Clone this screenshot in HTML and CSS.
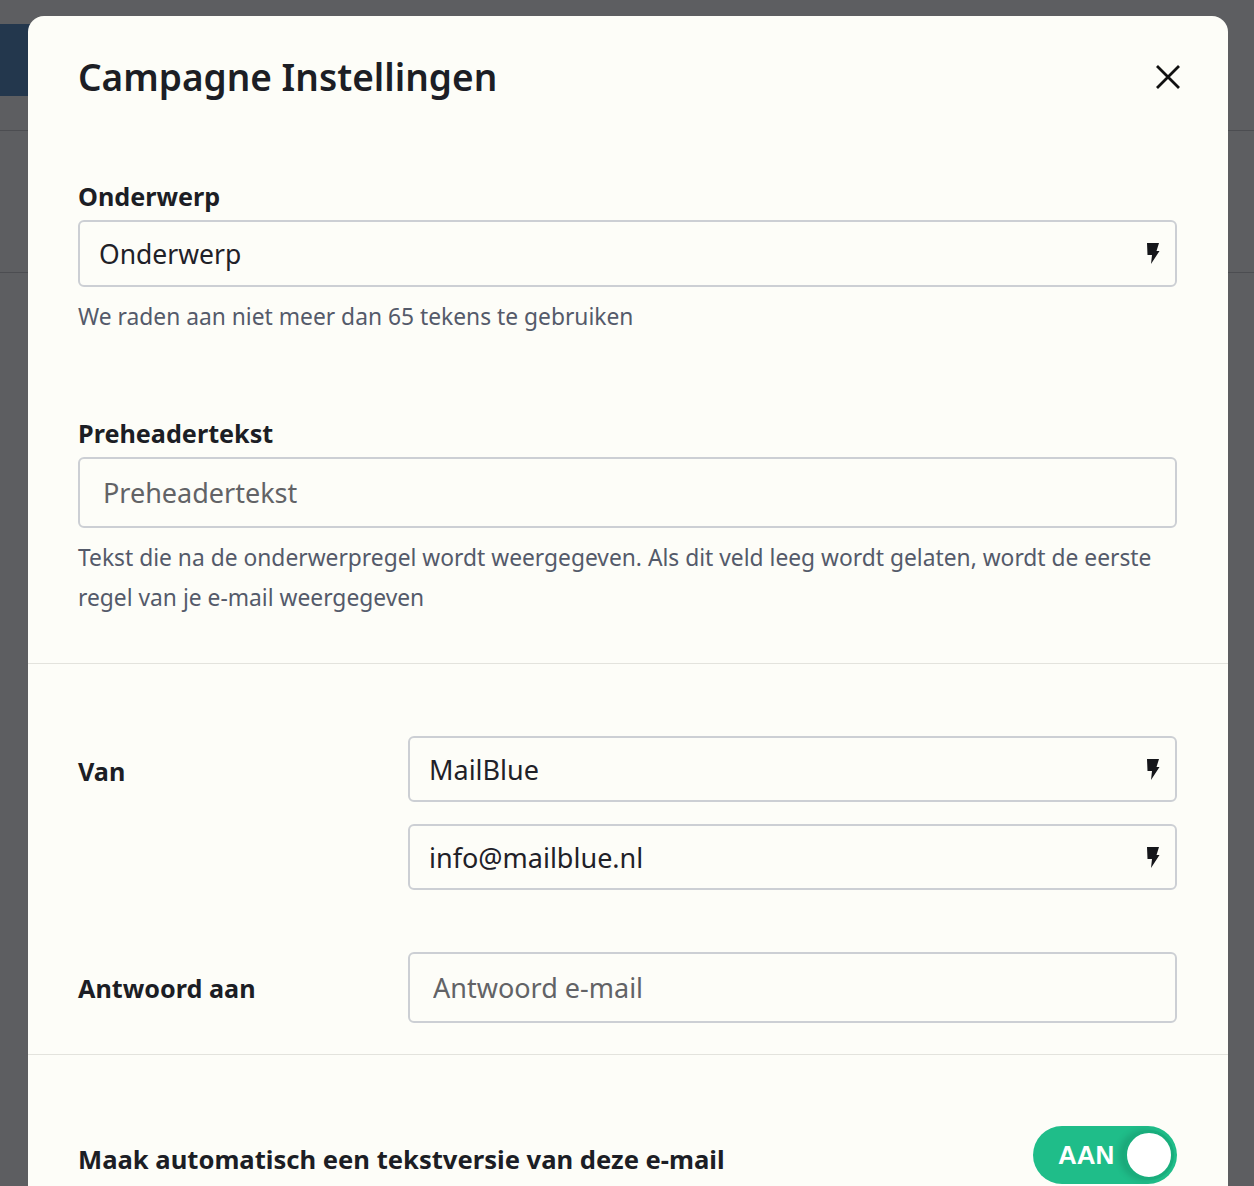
FILE: index.html
```html
<!DOCTYPE html>
<html lang="nl">
<head>
    <meta charset="UTF-8">
    <meta name="viewport" content="width=device-width, initial-scale=1.0">
    <title>Campagne Instellingen</title>
    <link rel="stylesheet" href="styles.css">
</head>
<body>
    <div class="app">
        <div class="app-bar"></div>
        <div class="app-row"></div>
        <div class="app-row tall"></div>
    </div>

    <div class="overlay">
        <div class="modal">
            <header class="modal-header">
                <h2 class="modal-title">Campagne Instellingen</h2>
                <button type="button" class="modal-close" aria-label="Sluiten">
                    <svg viewBox="0 0 26 26" width="26" height="26">
                        <path d="M2 2L24 24M24 2L2 24" stroke="#111" stroke-width="2.8" fill="none"/>
                    </svg>
                </button>
            </header>

            <section class="section">
                <div class="field">
                    <label class="field-label" for="subject">Onderwerp</label>
                    <div class="control">
                        <input type="text" id="subject" value="Onderwerp">
                        <svg class="bolt" viewBox="0 0 13 21"><path d="M0 0H12L9.5 8H12.5L4 21L5 12H0.5Z"/></svg>
                    </div>
                    <p class="hint">We raden aan niet meer dan 65 tekens te gebruiken</p>
                </div>

                <div class="field">
                    <label class="field-label" for="preheader">Preheadertekst</label>
                    <div class="control plain">
                        <input type="text" id="preheader" placeholder="Preheadertekst">
                    </div>
                    <p class="hint">Tekst die na de onderwerpregel wordt weergegeven. Als dit veld leeg wordt gelaten, wordt de eerste regel van je e-mail weergegeven</p>
                </div>
            </section>

            <section class="section senders">
                <div class="row">
                    <div class="row-label">Van</div>
                    <div class="stack">
                        <div class="control sender">
                            <input type="text" value="MailBlue">
                            <svg class="bolt" viewBox="0 0 13 21"><path d="M0 0H12L9.5 8H12.5L4 21L5 12H0.5Z"/></svg>
                        </div>
                        <div class="control sender">
                            <input type="text" value="info@mailblue.nl">
                            <svg class="bolt" viewBox="0 0 13 21"><path d="M0 0H12L9.5 8H12.5L4 21L5 12H0.5Z"/></svg>
                        </div>
                    </div>
                </div>
                <div class="row centered">
                    <div class="row-label">Antwoord aan</div>
                    <div class="control plain">
                        <input type="email" placeholder="Antwoord e-mail">
                    </div>
                </div>
            </section>

            <section class="section options">
                <div class="option">
                    <span class="option-label">Maak automatisch een tekstversie van deze e-mail</span>
                    <span class="toggle">
                        <span class="toggle-text">AAN</span>
                        <span class="toggle-knob"></span>
                    </span>
                </div>
            </section>
        </div>
    </div>
</body>
</html>
```

FILE: styles.css
```css
html, body {
    margin: 0;
    height: 100%;
    overflow: hidden;
}
body {
    font-family: "Noto Sans", Roboto, sans-serif;
    background-color: #5d5e61;
    color: #1e2027;
}

/* page behind the modal */
.app-bar {
    margin-top: 24px;
    width: 320px;
    height: 72px;
    background: #23374d;
}
.app-row {
    height: 34px;
    border-bottom: 1px solid #4c4d51;
}
.app-row.tall {
    height: 141px;
}

/* modal */
.overlay {
    position: fixed;
    inset: 0;
    padding: 16px 26px 0 28px;
}
.modal {
    background: #fdfdf8;
    border-radius: 16px 16px 0 0;
    height: 1300px;
}
.modal-header {
    display: flex;
    justify-content: space-between;
    align-items: center;
    padding: 36px 47px 0 50px;
}
.modal-title {
    margin: 0;
    font-size: 37px;
    font-weight: 600;
    line-height: 50px;
    color: #1c1e25;
}
.modal-close {
    display: flex;
    width: 26px;
    height: 26px;
    padding: 0;
    border: 0;
    background: none;
    cursor: pointer;
}
.section {
    padding: 79px 51px 45px 50px;
    border-bottom: 1px solid #e3e3dd;
}

/* fields */
.field + .field {
    margin-top: 81px;
}
.field-label,
.row-label,
.option-label {
    font-weight: 700;
    font-size: 25.2px;
    color: #1c1e25;
}
.field-label {
    display: block;
    line-height: 30px;
    margin-bottom: 9px;
}
.control {
    display: flex;
    align-items: center;
    height: 67px;
    padding: 0 15px 0 19px;
    border: 2px solid #cccfd4;
    border-radius: 6px;
    box-sizing: border-box;
}
.control.plain {
    height: 71px;
    padding-left: 23px;
}
.control.sender {
    height: 66px;
}
.control input {
    flex: 1;
    min-width: 0;
    padding: 0;
    border: 0;
    outline: 0;
    background: transparent;
    font-family: inherit;
    font-size: 27px;
    color: #1f2128;
}
#subject {
    font-size: 26.5px;
}
.control input::placeholder {
    color: #626366;
}
.bolt {
    flex-shrink: 0;
    width: 13px;
    height: 21px;
    fill: #15161a;
}
.hint {
    margin: 10px 0 0;
    font-size: 22.8px;
    line-height: 40px;
    color: #545a6a;
}

/* sender rows */
.section.senders {
    padding-top: 72px;
    padding-bottom: 31px;
}
.row {
    display: grid;
    grid-template-columns: 330px 1fr;
    align-items: start;
}
.row + .row {
    margin-top: 62px;
}
.row.centered {
    align-items: center;
}
.row-label {
    line-height: 66px;
    padding-top: 2px;
}
.row.centered .row-label {
    line-height: 30px;
    padding-top: 0;
}
.stack {
    display: flex;
    flex-direction: column;
    gap: 22px;
}

/* toggle */
.section.options {
    padding-top: 71px;
    padding-bottom: 0;
    border-bottom: 0;
}
.option {
    display: flex;
    justify-content: space-between;
    align-items: center;
}
.option-label {
    font-size: 25.6px;
    margin-top: 8px;
}
.toggle {
    display: flex;
    align-items: center;
    justify-content: space-between;
    width: 144px;
    height: 58px;
    padding: 0 3px 0 25px;
    border-radius: 29px;
    box-sizing: border-box;
    background: #1fbd89;
    color: #fff;
    font-family: "Liberation Sans", Arial, sans-serif;
    font-weight: 700;
    font-size: 26px;
}
.toggle-knob {
    width: 50px;
    height: 50px;
    border-radius: 50%;
    border: 3px solid #19ad7c;
    box-sizing: border-box;
    background: #fff;
    box-shadow: -5px 0 6px rgba(0, 0, 0, 0.12);
}
```
